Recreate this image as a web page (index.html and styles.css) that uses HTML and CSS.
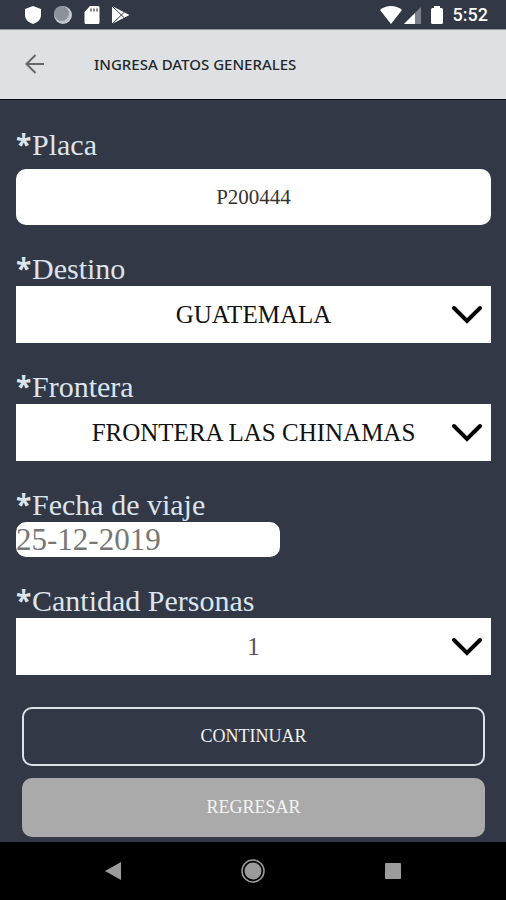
FILE: index.html
```html
<!DOCTYPE html>
<html lang="es">
<head>
<meta charset="utf-8">
<meta name="viewport" content="width=device-width, initial-scale=1">
<title>Ingresa datos generales</title>
<link rel="stylesheet" href="styles.css">
</head>
<body>
<div class="status">
  <div class="status-group status-left">
    <svg width="18" height="20" viewBox="0 0 18 20" aria-hidden="true"><path fill="#fff" d="M9 1l8 3v6c0 4.500-3.500 7.500-8 9-4.500-1.500-8-4.500-8-9V4z"/></svg>
    <svg width="20" height="20" viewBox="0 0 20 20" aria-hidden="true"><circle cx="10" cy="10" r="9" fill="#c3c6cc"/><circle cx="8.500" cy="8.500" r="7.500" fill="#8d919b"/></svg>
    <svg width="16" height="20" viewBox="0 0 16 20" aria-hidden="true"><path fill="#fff" d="M6 1h8a1.500 1.500 0 0 1 1.500 1.500v15A1.500 1.500 0 0 1 14 19H2a1.500 1.500 0 0 1-1.500-1.500V7z"/><path stroke="#5c616c" stroke-width="1.500" d="M7 3.500v3M10 3.500v3M13 3.500v3"/></svg>
    <svg width="19" height="20" viewBox="0 0 19 20" aria-hidden="true"><path fill="#fff" d="M1 1l17.500 9L1 19z"/><path d="M1 1l12.500 12M1 19L13.500 7" fill="none" stroke="#323846" stroke-width="1"/></svg>
  </div>
  <div class="status-group status-right">
    <svg width="22" height="20" viewBox="0 0 22 20" aria-hidden="true"><path fill="#fff" d="M0 5C6-.2 16-.2 22 5L11 19z"/></svg>
    <svg width="17" height="20" viewBox="0 0 17 20" aria-hidden="true"><path fill="#7c808b" d="M17 2v17H0z"/><path fill="#fff" d="M11 8v11H0z"/></svg>
    <svg class="battery" width="12" height="20" viewBox="0 0 12 20" aria-hidden="true"><path fill="#fff" d="M3 1h6v2h1.500A1.500 1.500 0 0 1 12 4.500v13a1.500 1.500 0 0 1-1.500 1.500h-9A1.500 1.500 0 0 1 0 17.500v-13A1.500 1.500 0 0 1 1.500 3H3z"/></svg>
    <span class="clock">5:52</span>
  </div>
</div>
<header class="header">
  <button class="back" type="button" aria-label="Volver">
    <svg width="20" height="20" viewBox="0 0 20 20" aria-hidden="true"><path d="M19 10H2M10.500 1L1.500 10l9 9" fill="none" stroke="#63676a" stroke-width="2"/></svg>
  </button>
  <h1 class="title">INGRESA DATOS GENERALES</h1>
</header>
<form class="form">
  <div class="field">
    <label class="label" for="placa"><span class="star">*</span>Placa</label>
    <input class="plate" id="placa" type="text" value="P200444">
  </div>
  <div class="field">
    <label class="label" for="destino"><span class="star">*</span>Destino</label>
    <div class="picker">
      <select class="select" id="destino"><option>GUATEMALA</option></select>
      <svg class="chevron" width="32" height="20" viewBox="0 0 32 20" aria-hidden="true"><path d="M3 3l13 13L29 3"/></svg>
    </div>
  </div>
  <div class="field">
    <label class="label" for="frontera"><span class="star">*</span>Frontera</label>
    <div class="picker">
      <select class="select" id="frontera"><option>FRONTERA LAS CHINAMAS</option></select>
      <svg class="chevron" width="32" height="20" viewBox="0 0 32 20" aria-hidden="true"><path d="M3 3l13 13L29 3"/></svg>
    </div>
  </div>
  <div class="field">
    <label class="label" for="fecha"><span class="star">*</span>Fecha de viaje</label>
    <input class="date" id="fecha" type="text" value="25-12-2019">
  </div>
  <div class="field">
    <label class="label" for="personas"><span class="star">*</span>Cantidad Personas</label>
    <div class="picker">
      <select class="select select-muted" id="personas"><option>1</option></select>
      <svg class="chevron" width="32" height="20" viewBox="0 0 32 20" aria-hidden="true"><path d="M3 3l13 13L29 3"/></svg>
    </div>
  </div>
  <div class="actions">
    <button class="button button-outline" type="button">CONTINUAR</button>
    <button class="button button-gray" type="button">REGRESAR</button>
  </div>
</form>
<nav class="navbar">
  <button class="nav-button" type="button" aria-label="Atrás"><svg width="24" height="24" viewBox="0 0 24 24" aria-hidden="true"><path fill="#9b9b9b" d="M4 12l16-9v18z"/></svg></button>
  <button class="nav-button" type="button" aria-label="Inicio"><svg width="24" height="24" viewBox="0 0 24 24" aria-hidden="true"><circle cx="12" cy="12" r="11" fill="none" stroke="#9b9b9b" stroke-width="1.500"/><circle cx="12" cy="12" r="8.500" fill="#9b9b9b"/></svg></button>
  <button class="nav-button" type="button" aria-label="Recientes"><svg width="24" height="24" viewBox="0 0 24 24" aria-hidden="true"><rect x="4" y="4" width="16" height="16" rx="1" fill="#9b9b9b"/></svg></button>
</nav>
</body>
</html>
```
FILE: styles.css
```css
* {
  box-sizing: border-box;
}

body {
  margin: 0;
  min-height: 100vh;
  display: flex;
  flex-direction: column;
  background: #323846;
  font-family: "Liberation Serif", serif;
}

button,
input,
select {
  margin: 0;
  border: 0;
  font-family: inherit;
}

.status {
  display: flex;
  justify-content: space-between;
  height: 30px;
  padding: 1px 18px 0 24px;
  border-bottom: 1px solid #8f959c;
}

.status-group {
  display: flex;
  align-items: center;
}

.status-left {
  gap: 11px;
}

.status-right {
  gap: 2px;
}

.battery {
  margin: 0 8px;
}

.clock {
  color: #fff;
  font: 500 18px/20px Roboto, sans-serif;
}

.header {
  display: flex;
  align-items: center;
  height: 70px;
  padding: 0 16px 2px;
  background: #dde1e4;
  border-bottom: 1px solid #0b0f14;
}

.back {
  display: flex;
  align-items: center;
  width: 78px;
  height: 48px;
  padding: 0 0 0 9px;
  background: none;
}

.title {
  margin: 0;
  color: #25282b;
  font: 500 15px/20px "Noto Sans", sans-serif;
}

.form {
  flex: 1;
  display: flex;
  flex-direction: column;
  gap: 29px;
  padding: 30px 15px 5px 16px;
}

.field {
  display: flex;
  flex-direction: column;
}

.label {
  margin-bottom: 2px;
  color: #dce4ee;
  font-size: 30px;
  line-height: 30px;
}

.star {
  display: inline-block;
  width: 16px;
  font-family: "Open Sans", sans-serif;
  font-size: 28px;
  font-weight: 700;
  line-height: 20px;
}

.plate {
  width: 100%;
  height: 56px;
  margin-top: 7px;
  padding: 0 12px;
  border-radius: 10px;
  background: #fff;
  color: #333;
  font-size: 21px;
  text-align: center;
}

.picker {
  position: relative;
  display: flex;
}

.select {
  appearance: none;
  width: 100%;
  height: 57px;
  padding: 0 40px;
  border-radius: 0;
  background: #fff;
  color: #111;
  font-size: 25px;
  text-align: center;
  text-align-last: center;
}

.select-muted {
  color: #555;
}

.chevron {
  position: absolute;
  top: 19px;
  right: 8px;
  fill: none;
  stroke: #000;
  stroke-width: 4;
  stroke-linecap: round;
  pointer-events: none;
}

.date {
  width: 264px;
  height: 35px;
  padding: 0;
  border-radius: 10px;
  background: #fff;
  color: #777;
  font-size: 31px;
}

.actions {
  display: flex;
  flex-direction: column;
  gap: 12px;
  margin-top: 3px;
  padding: 0 6px;
}

.button {
  height: 59px;
  border-radius: 10px;
  color: #f2f4f6;
  font-size: 18px;
}

.button-outline {
  border: 2px solid #dce1e8;
  background: #323846;
}

.button-gray {
  background: #aaa;
}

.navbar {
  display: flex;
  justify-content: center;
  gap: 92px;
  height: 58px;
  background: #000;
}

.nav-button {
  display: flex;
  align-items: center;
  justify-content: center;
  width: 48px;
  padding: 0;
  background: none;
}
```
